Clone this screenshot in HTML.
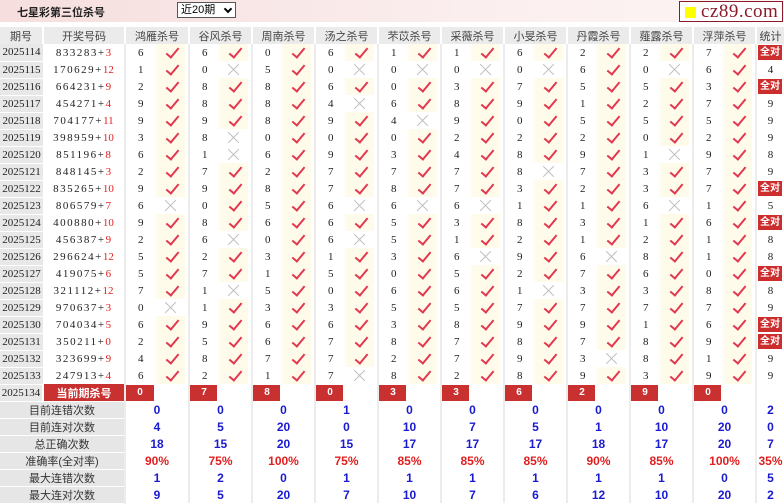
<!DOCTYPE html>
<html><head><meta charset="utf-8">
<style>
*{margin:0;padding:0;box-sizing:border-box}
body{width:784px;height:502px;overflow:hidden;background:#fff;font-family:"Liberation Sans","Noto Sans CJK SC",sans-serif;position:relative}
.top{position:absolute;left:0;top:0;width:784px;height:22px;background:linear-gradient(90deg,#f6dede,#fbeeee 60%,#fdf5f5)}
.title{position:absolute;left:17px;top:4px;font-size:11px;font-weight:bold;color:#222}
.sel{position:absolute;left:177px;top:2px;width:59px;height:16px;border:1px solid #555;background:#fff;font-size:11px;padding-left:3px;line-height:14px;color:#000}
.sel b{position:absolute;right:4px;top:3px;width:6px;height:6px;border-right:2px solid #000;border-bottom:2px solid #000;transform:rotate(45deg)}
.logo{position:absolute;left:679px;top:1px;width:104px;height:21px;border:1px solid #8b1a2a;background:#fff;font-family:"Liberation Serif",serif;font-size:19px;color:#8b1a2a;line-height:19px;padding-left:21px;letter-spacing:0.5px}
.logo i{position:absolute;left:5px;top:5px;width:11px;height:11px;background:#ffff00}
table{position:absolute;left:0;top:27px;border-collapse:collapse;table-layout:fixed;width:784px}
td{height:17px;padding:0;font-size:11px;white-space:nowrap;overflow:hidden}
th{height:17px;font-weight:normal;font-size:11px;color:#444;background:#ebebeb;border-left:2px solid #fff}
td.p{background:#e8e8e8;text-align:center;font-family:"Liberation Serif",serif;font-size:11px;color:#222;border-bottom:1px solid #fff}
td.d{text-align:center;font-family:"Liberation Serif",serif;font-size:11px;color:#222;letter-spacing:1.5px}
td.d s{text-decoration:none;color:#e02020;letter-spacing:0}
td.n{padding-left:12px;font-family:"Liberation Serif",serif;font-size:11px;color:#222;border-left:2px solid #ececec}
td.k{background:linear-gradient(90deg,#fff 0,#fffbea 4px,#fffbea 31px,#fff 31px);position:relative}
td.x{background:#fff;position:relative}
td.k:after{content:"";position:absolute;left:15px;top:1px;width:5px;height:11px;border-right:2px solid #e2384f;border-bottom:2px solid #e2384f;transform:rotate(40deg)}
td.x:before,td.x:after{content:"";position:absolute;left:9px;top:8px;width:15px;height:1px;background:#bbb}
td.x:before{transform:rotate(45deg)}td.x:after{transform:rotate(-45deg)}
td.t{text-align:center;font-family:"Liberation Serif",serif;font-size:11px;color:#222;border-left:2px solid #ececec}
.q{background:#cc2e2e;color:#fff;font-weight:bold;font-size:10px;display:block;width:24px;margin-left:1px;height:15px;line-height:15px;text-align:center;font-family:"Liberation Sans","Noto Sans CJK SC",sans-serif}
td.cur{background:#c93131;color:#fff;font-weight:bold;text-align:center;font-size:11px;border-left:2px solid #fff}
td.r{padding:0;border-left:2px solid #ececec}
td.r span{display:block;background:#c93131;color:#fff;font-weight:bold;width:28px;height:16px;line-height:16px;text-align:center;font-size:10px}
td.l{background:#e6e6e6;text-align:center;color:#333;font-size:11px;border-bottom:1px solid #fff}
td.v{text-align:center;font-weight:bold;color:#1a1ad0;font-size:12px;border-left:2px solid #ececec}
td.v.rd{color:#e02020}
</style></head><body>
<div class="top"></div>
<div class="title">七星彩第三位杀号</div>
<div class="sel">近20期<b></b></div>
<div class="logo"><i></i>cz89.com</div>
<table>
<colgroup><col style="width:43px"><col style="width:82px">
<col style="width:29px"><col style="width:35px">
<col style="width:28px"><col style="width:35px"><col style="width:28px"><col style="width:35px"><col style="width:28px"><col style="width:35px"><col style="width:28px"><col style="width:35px"><col style="width:28px"><col style="width:35px"><col style="width:28px"><col style="width:35px"><col style="width:28px"><col style="width:35px"><col style="width:28px"><col style="width:35px"><col style="width:28px"><col style="width:35px">
<col style="width:28px"></colgroup>
<tr><th style="border-left:0">期号</th><th>开奖号码</th><th colspan="2">鸿雁杀号</th><th colspan="2">谷风杀号</th><th colspan="2">周南杀号</th><th colspan="2">汤之杀号</th><th colspan="2">芣苡杀号</th><th colspan="2">采薇杀号</th><th colspan="2">小旻杀号</th><th colspan="2">丹霞杀号</th><th colspan="2">薤露杀号</th><th colspan="2">浮萍杀号</th><th>统计</th></tr>
<tr><td class="p">2025114</td><td class="d">833283+<s>3</s></td><td class="n">6</td><td class="k"></td><td class="n">6</td><td class="k"></td><td class="n">0</td><td class="k"></td><td class="n">6</td><td class="k"></td><td class="n">1</td><td class="k"></td><td class="n">1</td><td class="k"></td><td class="n">6</td><td class="k"></td><td class="n">2</td><td class="k"></td><td class="n">2</td><td class="k"></td><td class="n">7</td><td class="k"></td><td class="t"><span class="q">全对</span></td></tr>
<tr><td class="p">2025115</td><td class="d">170629+<s>12</s></td><td class="n">1</td><td class="k"></td><td class="n">0</td><td class="x"></td><td class="n">5</td><td class="k"></td><td class="n">0</td><td class="x"></td><td class="n">0</td><td class="x"></td><td class="n">0</td><td class="x"></td><td class="n">0</td><td class="x"></td><td class="n">6</td><td class="k"></td><td class="n">0</td><td class="x"></td><td class="n">6</td><td class="k"></td><td class="t">4</td></tr>
<tr><td class="p">2025116</td><td class="d">664231+<s>9</s></td><td class="n">2</td><td class="k"></td><td class="n">8</td><td class="k"></td><td class="n">8</td><td class="k"></td><td class="n">6</td><td class="k"></td><td class="n">0</td><td class="k"></td><td class="n">3</td><td class="k"></td><td class="n">7</td><td class="k"></td><td class="n">5</td><td class="k"></td><td class="n">5</td><td class="k"></td><td class="n">3</td><td class="k"></td><td class="t"><span class="q">全对</span></td></tr>
<tr><td class="p">2025117</td><td class="d">454271+<s>4</s></td><td class="n">9</td><td class="k"></td><td class="n">8</td><td class="k"></td><td class="n">8</td><td class="k"></td><td class="n">4</td><td class="x"></td><td class="n">6</td><td class="k"></td><td class="n">8</td><td class="k"></td><td class="n">9</td><td class="k"></td><td class="n">1</td><td class="k"></td><td class="n">2</td><td class="k"></td><td class="n">7</td><td class="k"></td><td class="t">9</td></tr>
<tr><td class="p">2025118</td><td class="d">704177+<s>11</s></td><td class="n">9</td><td class="k"></td><td class="n">9</td><td class="k"></td><td class="n">8</td><td class="k"></td><td class="n">9</td><td class="k"></td><td class="n">4</td><td class="x"></td><td class="n">9</td><td class="k"></td><td class="n">0</td><td class="k"></td><td class="n">5</td><td class="k"></td><td class="n">5</td><td class="k"></td><td class="n">5</td><td class="k"></td><td class="t">9</td></tr>
<tr><td class="p">2025119</td><td class="d">398959+<s>10</s></td><td class="n">3</td><td class="k"></td><td class="n">8</td><td class="x"></td><td class="n">0</td><td class="k"></td><td class="n">0</td><td class="k"></td><td class="n">0</td><td class="k"></td><td class="n">2</td><td class="k"></td><td class="n">2</td><td class="k"></td><td class="n">2</td><td class="k"></td><td class="n">0</td><td class="k"></td><td class="n">2</td><td class="k"></td><td class="t">9</td></tr>
<tr><td class="p">2025120</td><td class="d">851196+<s>8</s></td><td class="n">6</td><td class="k"></td><td class="n">1</td><td class="x"></td><td class="n">6</td><td class="k"></td><td class="n">9</td><td class="k"></td><td class="n">3</td><td class="k"></td><td class="n">4</td><td class="k"></td><td class="n">8</td><td class="k"></td><td class="n">9</td><td class="k"></td><td class="n">1</td><td class="x"></td><td class="n">9</td><td class="k"></td><td class="t">8</td></tr>
<tr><td class="p">2025121</td><td class="d">848145+<s>3</s></td><td class="n">2</td><td class="k"></td><td class="n">7</td><td class="k"></td><td class="n">2</td><td class="k"></td><td class="n">7</td><td class="k"></td><td class="n">7</td><td class="k"></td><td class="n">7</td><td class="k"></td><td class="n">8</td><td class="x"></td><td class="n">7</td><td class="k"></td><td class="n">3</td><td class="k"></td><td class="n">7</td><td class="k"></td><td class="t">9</td></tr>
<tr><td class="p">2025122</td><td class="d">835265+<s>10</s></td><td class="n">9</td><td class="k"></td><td class="n">9</td><td class="k"></td><td class="n">8</td><td class="k"></td><td class="n">7</td><td class="k"></td><td class="n">8</td><td class="k"></td><td class="n">7</td><td class="k"></td><td class="n">3</td><td class="k"></td><td class="n">2</td><td class="k"></td><td class="n">3</td><td class="k"></td><td class="n">7</td><td class="k"></td><td class="t"><span class="q">全对</span></td></tr>
<tr><td class="p">2025123</td><td class="d">806579+<s>7</s></td><td class="n">6</td><td class="x"></td><td class="n">0</td><td class="k"></td><td class="n">5</td><td class="k"></td><td class="n">6</td><td class="x"></td><td class="n">6</td><td class="x"></td><td class="n">6</td><td class="x"></td><td class="n">1</td><td class="k"></td><td class="n">1</td><td class="k"></td><td class="n">6</td><td class="x"></td><td class="n">1</td><td class="k"></td><td class="t">5</td></tr>
<tr><td class="p">2025124</td><td class="d">400880+<s>10</s></td><td class="n">9</td><td class="k"></td><td class="n">8</td><td class="k"></td><td class="n">6</td><td class="k"></td><td class="n">6</td><td class="k"></td><td class="n">5</td><td class="k"></td><td class="n">3</td><td class="k"></td><td class="n">8</td><td class="k"></td><td class="n">3</td><td class="k"></td><td class="n">1</td><td class="k"></td><td class="n">6</td><td class="k"></td><td class="t"><span class="q">全对</span></td></tr>
<tr><td class="p">2025125</td><td class="d">456387+<s>9</s></td><td class="n">2</td><td class="k"></td><td class="n">6</td><td class="x"></td><td class="n">0</td><td class="k"></td><td class="n">6</td><td class="x"></td><td class="n">5</td><td class="k"></td><td class="n">1</td><td class="k"></td><td class="n">2</td><td class="k"></td><td class="n">1</td><td class="k"></td><td class="n">2</td><td class="k"></td><td class="n">1</td><td class="k"></td><td class="t">8</td></tr>
<tr><td class="p">2025126</td><td class="d">296624+<s>12</s></td><td class="n">5</td><td class="k"></td><td class="n">2</td><td class="k"></td><td class="n">3</td><td class="k"></td><td class="n">1</td><td class="k"></td><td class="n">3</td><td class="k"></td><td class="n">6</td><td class="x"></td><td class="n">9</td><td class="k"></td><td class="n">6</td><td class="x"></td><td class="n">8</td><td class="k"></td><td class="n">1</td><td class="k"></td><td class="t">8</td></tr>
<tr><td class="p">2025127</td><td class="d">419075+<s>6</s></td><td class="n">5</td><td class="k"></td><td class="n">7</td><td class="k"></td><td class="n">1</td><td class="k"></td><td class="n">5</td><td class="k"></td><td class="n">0</td><td class="k"></td><td class="n">5</td><td class="k"></td><td class="n">2</td><td class="k"></td><td class="n">7</td><td class="k"></td><td class="n">6</td><td class="k"></td><td class="n">0</td><td class="k"></td><td class="t"><span class="q">全对</span></td></tr>
<tr><td class="p">2025128</td><td class="d">321112+<s>12</s></td><td class="n">7</td><td class="k"></td><td class="n">1</td><td class="x"></td><td class="n">5</td><td class="k"></td><td class="n">0</td><td class="k"></td><td class="n">6</td><td class="k"></td><td class="n">6</td><td class="k"></td><td class="n">1</td><td class="x"></td><td class="n">3</td><td class="k"></td><td class="n">3</td><td class="k"></td><td class="n">8</td><td class="k"></td><td class="t">8</td></tr>
<tr><td class="p">2025129</td><td class="d">970637+<s>3</s></td><td class="n">0</td><td class="x"></td><td class="n">1</td><td class="k"></td><td class="n">3</td><td class="k"></td><td class="n">3</td><td class="k"></td><td class="n">5</td><td class="k"></td><td class="n">5</td><td class="k"></td><td class="n">7</td><td class="k"></td><td class="n">7</td><td class="k"></td><td class="n">7</td><td class="k"></td><td class="n">7</td><td class="k"></td><td class="t">9</td></tr>
<tr><td class="p">2025130</td><td class="d">704034+<s>5</s></td><td class="n">6</td><td class="k"></td><td class="n">9</td><td class="k"></td><td class="n">6</td><td class="k"></td><td class="n">6</td><td class="k"></td><td class="n">3</td><td class="k"></td><td class="n">8</td><td class="k"></td><td class="n">9</td><td class="k"></td><td class="n">9</td><td class="k"></td><td class="n">1</td><td class="k"></td><td class="n">6</td><td class="k"></td><td class="t"><span class="q">全对</span></td></tr>
<tr><td class="p">2025131</td><td class="d">350211+<s>0</s></td><td class="n">2</td><td class="k"></td><td class="n">5</td><td class="k"></td><td class="n">6</td><td class="k"></td><td class="n">7</td><td class="k"></td><td class="n">8</td><td class="k"></td><td class="n">7</td><td class="k"></td><td class="n">8</td><td class="k"></td><td class="n">7</td><td class="k"></td><td class="n">8</td><td class="k"></td><td class="n">9</td><td class="k"></td><td class="t"><span class="q">全对</span></td></tr>
<tr><td class="p">2025132</td><td class="d">323699+<s>9</s></td><td class="n">4</td><td class="k"></td><td class="n">8</td><td class="k"></td><td class="n">7</td><td class="k"></td><td class="n">7</td><td class="k"></td><td class="n">2</td><td class="k"></td><td class="n">7</td><td class="k"></td><td class="n">9</td><td class="k"></td><td class="n">3</td><td class="x"></td><td class="n">8</td><td class="k"></td><td class="n">1</td><td class="k"></td><td class="t">9</td></tr>
<tr><td class="p">2025133</td><td class="d">247913+<s>4</s></td><td class="n">6</td><td class="k"></td><td class="n">2</td><td class="k"></td><td class="n">1</td><td class="k"></td><td class="n">7</td><td class="x"></td><td class="n">8</td><td class="k"></td><td class="n">2</td><td class="k"></td><td class="n">8</td><td class="k"></td><td class="n">9</td><td class="k"></td><td class="n">3</td><td class="k"></td><td class="n">9</td><td class="k"></td><td class="t">9</td></tr>
<tr><td class="p">2025134</td><td class="cur">当前期杀号</td><td class="r"><span>0</span></td><td></td><td class="r"><span>7</span></td><td></td><td class="r"><span>8</span></td><td></td><td class="r"><span>0</span></td><td></td><td class="r"><span>3</span></td><td></td><td class="r"><span>3</span></td><td></td><td class="r"><span>6</span></td><td></td><td class="r"><span>2</span></td><td></td><td class="r"><span>9</span></td><td></td><td class="r"><span>0</span></td><td></td><td class="t"></td></tr>
<tr><td class="l" colspan="2">目前连错次数</td><td class="v" colspan="2">0</td><td class="v" colspan="2">0</td><td class="v" colspan="2">0</td><td class="v" colspan="2">1</td><td class="v" colspan="2">0</td><td class="v" colspan="2">0</td><td class="v" colspan="2">0</td><td class="v" colspan="2">0</td><td class="v" colspan="2">0</td><td class="v" colspan="2">0</td><td class="v">2</td></tr>
<tr><td class="l" colspan="2">目前连对次数</td><td class="v" colspan="2">4</td><td class="v" colspan="2">5</td><td class="v" colspan="2">20</td><td class="v" colspan="2">0</td><td class="v" colspan="2">10</td><td class="v" colspan="2">7</td><td class="v" colspan="2">5</td><td class="v" colspan="2">1</td><td class="v" colspan="2">10</td><td class="v" colspan="2">20</td><td class="v">0</td></tr>
<tr><td class="l" colspan="2">总正确次数</td><td class="v" colspan="2">18</td><td class="v" colspan="2">15</td><td class="v" colspan="2">20</td><td class="v" colspan="2">15</td><td class="v" colspan="2">17</td><td class="v" colspan="2">17</td><td class="v" colspan="2">17</td><td class="v" colspan="2">18</td><td class="v" colspan="2">17</td><td class="v" colspan="2">20</td><td class="v">7</td></tr>
<tr><td class="l" colspan="2">准确率(全对率)</td><td class="v rd" colspan="2">90%</td><td class="v rd" colspan="2">75%</td><td class="v rd" colspan="2">100%</td><td class="v rd" colspan="2">75%</td><td class="v rd" colspan="2">85%</td><td class="v rd" colspan="2">85%</td><td class="v rd" colspan="2">85%</td><td class="v rd" colspan="2">90%</td><td class="v rd" colspan="2">85%</td><td class="v rd" colspan="2">100%</td><td class="v rd">35%</td></tr>
<tr><td class="l" colspan="2">最大连错次数</td><td class="v" colspan="2">1</td><td class="v" colspan="2">2</td><td class="v" colspan="2">0</td><td class="v" colspan="2">1</td><td class="v" colspan="2">1</td><td class="v" colspan="2">1</td><td class="v" colspan="2">1</td><td class="v" colspan="2">1</td><td class="v" colspan="2">1</td><td class="v" colspan="2">0</td><td class="v">5</td></tr>
<tr><td class="l" colspan="2">最大连对次数</td><td class="v" colspan="2">9</td><td class="v" colspan="2">5</td><td class="v" colspan="2">20</td><td class="v" colspan="2">7</td><td class="v" colspan="2">10</td><td class="v" colspan="2">7</td><td class="v" colspan="2">6</td><td class="v" colspan="2">12</td><td class="v" colspan="2">10</td><td class="v" colspan="2">20</td><td class="v">2</td></tr>
</table>
</body></html>
